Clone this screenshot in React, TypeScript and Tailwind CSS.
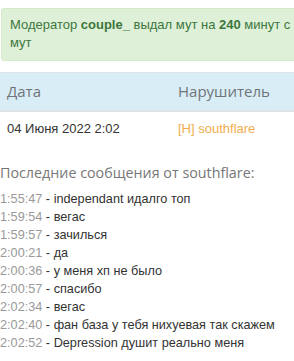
const messages: [string, string][] = [
  ["1:55:47", "independant идалго топ"],
  ["1:59:54", "вегас"],
  ["1:59:57", "зачилься"],
  ["2:00:21", "да"],
  ["2:00:36", "у меня хп не было"],
  ["2:00:57", "спасибо"],
  ["2:02:34", "вегас"],
  ["2:02:40", "фан база у тебя нихуевая так скажем"],
  ["2:02:52", "Depression душит реально меня"],
];

export default function App() {
  return (
    <div className="w-[294px] h-[361px] overflow-hidden bg-white font-['Liberation_Sans',Arial,sans-serif]">
      <div className="w-[420px] pt-2">
        <div className="ml-px w-[360px] rounded-[3px] border border-[#d6e9c6] bg-[#dff0d8] pl-2 pr-1 pt-[7px] pb-[8px] text-[13px] leading-[18px] text-[#3c763d]">
          Модератор <b>couple_</b> выдал мут на <b>240</b> минут с причиной:
          <br />
          мут
        </div>
      </div>

      <table className="mt-[11px] w-[294px] border-collapse font-['Open_Sans',sans-serif]">
        <thead>
          <tr className="bg-[#d9edf7]">
            <th className="h-[38px] w-[171px] border-t border-b-2 border-[#dde3e6] pl-[7px] text-left text-[15px] font-normal text-[#6f7478]">Дата</th>
            <th className="h-[38px] border-t border-b-2 border-[#dde3e6] pl-[7px] text-left text-[15px] font-normal text-[#6f7478]">Нарушитель</th>
          </tr>
        </thead>
        <tbody>
          <tr className="font-['Liberation_Sans',Arial,sans-serif] text-[13px]">
            <td className="h-[35px] pl-[7px] text-[#333]">04 Июня 2022 2:02</td>
            <td className="h-[35px] pl-[7px] text-[#f0ad4e]">[H] southflare</td>
          </tr>
        </tbody>
      </table>

      <div className="mt-[17px] font-['Open_Sans',sans-serif] text-[14.3px] leading-[20px] text-[#777]">
        Последние сообщения от southflare:
      </div>
      <ul className="mt-[7px] text-[12.7px] leading-[18px] text-[#333]">
        {messages.map(([t, m]) => (
          <li key={t + m} className="whitespace-nowrap">
            <span className="text-[#999]">{t}</span> - {m}
          </li>
        ))}
      </ul>
    </div>
  );
}
